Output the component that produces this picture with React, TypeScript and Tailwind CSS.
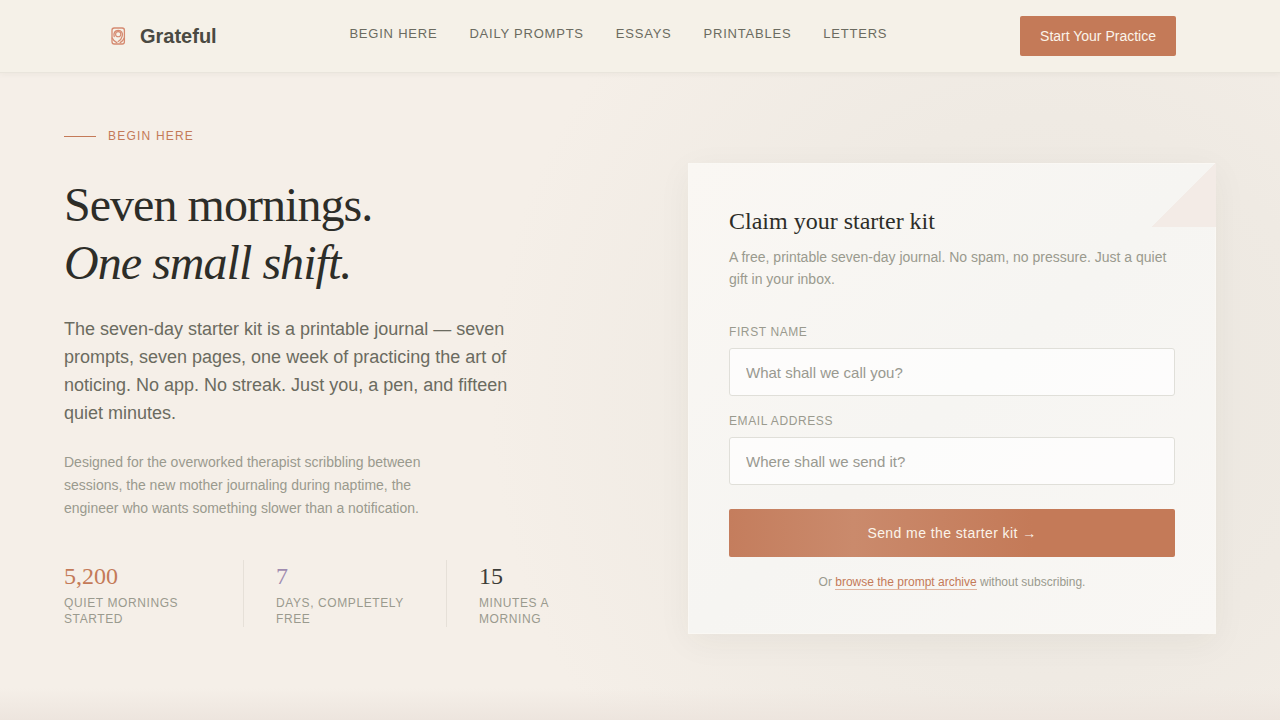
import React from "react";

const NAV_LINKS = ["Begin Here", "Daily Prompts", "Essays", "Printables", "Letters"];

const STATS = [
  { value: "5,200", label: "Quiet mornings started", tone: "text-[#c47a58]", box: "pr-8" },
  { value: "7", label: "Days, completely free", tone: "text-[#a08cb0]", box: "border-l border-[#e6e0d8] px-8" },
  { value: "15", label: "Minutes a morning", tone: "text-[#3d3d38]", box: "border-l border-[#e6e0d8] pl-8" },
];

function LogoMark() {
  return (
    <svg
      viewBox="0 0 28 28"
      className="size-7"
      fill="none"
      stroke="#d58a70"
      strokeWidth="1.3"
      strokeLinecap="round"
      strokeLinejoin="round"
      aria-hidden="true"
    >
      <rect x="8" y="6" width="12.400" height="16" rx="2.200" />
      <circle cx="14.200" cy="12.200" r="2.600" strokeWidth="1.100" />
      <path d="M10.200 14.500c-.9-3.400.6-6.200 4-6.200s4.800 2.800 4 5.800c-.6 2.400-2 4.400-4 5.400" />
      <path d="M8.200 16c1 2.400 2.600 3.600 4.600 4.600M20.200 16c-.8 2.300-2.200 3.600-4 4.600" />
    </svg>
  );
}

function Header() {
  return (
    <header className="relative z-10 border-b border-[#e9e5dc] bg-[#f5f1e8] px-16 shadow-[0_1px_6px_rgba(60,55,45,0.05)]">
      <div className="flex h-18 items-center justify-between px-10">
        <a href="#home" className="flex items-center gap-2 text-xl font-bold text-[#4a4a42]">
          <LogoMark />
          Grateful
        </a>
        <nav className="flex gap-8 pb-1">
          {NAV_LINKS.map((link) => (
            <a key={link} href="#" className="text-[13px] leading-5 tracking-[0.06em] text-[#6b6b60] uppercase">
              {link}
            </a>
          ))}
        </nav>
        <button type="button" className="h-10 rounded-xs bg-[#c47a58] px-5 text-sm text-[#fbf4ea]">
          Start Your Practice
        </button>
      </div>
    </header>
  );
}

function Intro() {
  return (
    <div className="pb-[42px]">
      <p className="flex items-center gap-3 text-xs tracking-[0.1em] text-[#c47a58] uppercase">
        <span className="h-px w-8 bg-[#c47a58]" />
        Begin here
      </p>
      <h1 className="mt-8 font-['Liberation_Serif',serif] text-5xl leading-[58px] tracking-[-0.02em] text-[#2d2d28]">
        Seven mornings.
        <br />
        <em>One small shift.</em>
      </h1>
      <p className="mt-[23px] max-w-md text-lg leading-7 text-[#6b6b60]">
        The seven-day starter kit is a printable journal — seven prompts, seven pages, one week of practicing the
        art of noticing. No app. No streak. Just you, a pen, and fifteen quiet minutes.
      </p>
      <p className="mt-6 max-w-96 text-sm leading-[23px] text-[#9a9a8e]">
        Designed for the overworked therapist scribbling between sessions, the new mother journaling during naptime,
        the engineer who wants something slower than a notification.
      </p>
      <dl className="mt-10 grid grid-cols-[179px_203px_1fr]">
        {STATS.map((stat) => (
          <div key={stat.value} className={`flex flex-col-reverse justify-end gap-[3px] ${stat.box}`}>
            <dt className="text-xs tracking-[0.05em] text-[#9a9a8e] uppercase">{stat.label}</dt>
            <dd className={`font-['Liberation_Serif',serif] text-2xl ${stat.tone}`}>{stat.value}</dd>
          </div>
        ))}
      </dl>
    </div>
  );
}

function Field({ id, label, type, placeholder }: { id: string; label: string; type: string; placeholder: string }) {
  return (
    <div>
      <label htmlFor={id} className="mb-2 block text-xs tracking-[0.05em] text-[#9a9a8e] uppercase">
        {label}
      </label>
      <input
        id={id}
        type={type}
        placeholder={placeholder}
        className="block h-12 w-full rounded-[3px] border border-[#e0dfd9] bg-white/70 px-4 text-[15px] text-[#2d2d28] placeholder:text-[#999990]"
      />
    </div>
  );
}

function SignupCard() {
  return (
    <form className="relative border border-[#faf8f4] bg-linear-to-br from-[#faf7f3] via-[#f6f5f2] to-[#f9f7f4] px-10 pt-10 pb-[42px] shadow-[0_8px_32px_rgba(60,55,45,0.05)]">
      <span className="absolute -top-px -right-px size-16 bg-[linear-gradient(135deg,transparent_50%,#f3ebe6_50%)]" />
      <h2 className="font-['Liberation_Serif',serif] text-2xl leading-[34px] text-[#2d2d28]">Claim your starter kit</h2>
      <p className="mt-2 text-sm leading-[22px] text-[#9a9a8e]">
        A free, printable seven-day journal. No spam, no pressure. Just a quiet gift in your inbox.
      </p>
      <div className="mt-[34px] flex flex-col gap-[17px]">
        <Field id="first-name" label="First name" type="text" placeholder="What shall we call you?" />
        <Field id="email" label="Email address" type="email" placeholder="Where shall we send it?" />
      </div>
      <button
        type="button"
        className="mt-6 h-12 w-full rounded-xs bg-[linear-gradient(90deg,#c47d5d_0%,#ca8a6c_28%,#c88566_40%,#c47a58_68%)] text-sm tracking-[0.03em] text-[#fbf4ea]"
      >
        Send me the starter kit →
      </button>
      <p className="mt-4 text-center text-xs leading-[18px] text-[#9a9a8e]">
        Or{" "}
        <a href="#archive" className="border-b border-[#e0b5a0] text-[#c47a58]">
          browse the prompt archive
        </a>{" "}
        without subscribing.
      </p>
    </form>
  );
}

export default function App() {
  return (
    <div className="min-h-screen bg-[#f5efe8] font-['Liberation_Sans',sans-serif]">
      <Header />
      <main className="bg-[linear-gradient(to_top,#ede5de_0px,transparent_32px),radial-gradient(circle_at_82%_50%,#ebe7e0_0px,#efeae3_280px,#f5efe8_560px)]">
        <section className="grid min-h-[calc(100vh-73px)] grid-cols-2 items-center gap-24 px-16 pt-13 pb-12">
          <Intro />
          <SignupCard />
        </section>
      </main>
    </div>
  );
}
